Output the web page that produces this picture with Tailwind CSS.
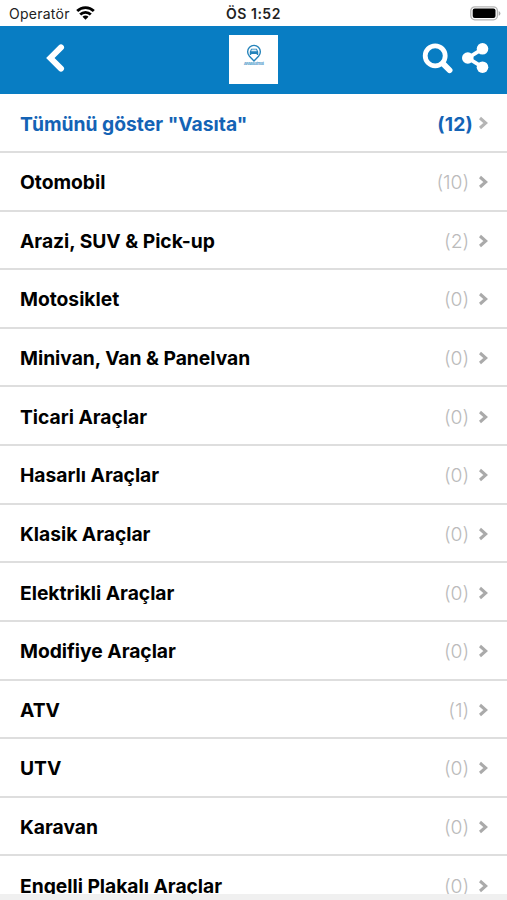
<!DOCTYPE html>
<html lang="tr">
<head>
  <meta charset="UTF-8" />
  <meta name="viewport" content="width=device-width, initial-scale=1.0" />
  <title>Vasıta</title>
  <script src="https://cdn.jsdelivr.net/npm/@tailwindcss/browser@4"></script>
</head>
<body class="h-screen flex flex-col overflow-hidden bg-white text-black font-['Inter',sans-serif]">
  <!-- Durum çubuğu -->
  <div class="h-[25.5px] shrink-0 grid grid-cols-3 items-center pl-[9px] pr-[6px] pt-px text-[14px] leading-none">
    <div class="flex items-center gap-[6px] text-[#222]">
      <span class="pt-px tracking-[0.25px]">Operatör</span>
      <svg class="w-[19px] h-[14px] mb-px text-black" viewBox="0 0 19 14" fill="none" stroke="currentColor" stroke-width="2.8">
        <path d="M1.2 5.1a11.8 11.8 0 0 1 16.6 0" />
        <path d="M4.2 8.5a7.5 7.5 0 0 1 10.6 0" />
        <path d="M9.5 13.8 6.5 10.8a4.2 4.2 0 0 1 6 0z" fill="currentColor" stroke="none" />
      </svg>
    </div>
    <div class="text-center pt-px pr-[3px] font-semibold tracking-[0.5px] text-[#222]">ÖS 1:52</div>
    <svg class="justify-self-end w-[31px] h-[15px]" viewBox="0 0 31 15">
      <rect x=".8" y=".8" width="26.6" height="13" rx="4" fill="#fff" stroke="#b5b5b5" stroke-width="1.3" />
      <rect x="2.7" y="2.6" width="22.8" height="9.5" rx="2" fill="#000" />
      <path d="M28.7 5v4.8q1.7-.7 1.7-2.4t-1.7-2.4z" fill="#aaa" />
    </svg>
  </div>

  <!-- Üst menü -->
  <header class="h-[68px] shrink-0 bg-[#087dc3] grid grid-cols-3 items-center text-white">
    <button class="justify-self-start ml-[45px] mb-[3px]">
      <svg class="block w-5 h-[30px]" viewBox="0 0 20 30" fill="none" stroke="currentColor" stroke-width="6" stroke-linecap="round" stroke-linejoin="miter">
        <path d="M16 4.4 5.4 15 16 25.6" />
      </svg>
    </button>
    <div class="justify-self-center w-[49px] h-[49px] bg-white flex flex-col items-center pt-[9px]">
      <svg class="w-[16px] h-[18px]" viewBox="0 0 15 17">
        <path d="M7.5 16 3.2 11.5A6 6 0 1 1 11.8 11.5z" fill="#fff" stroke="#2483ba" stroke-width="1.3" />
        <path d="M3.5 7.3 4.8 4.6h5.4l1.3 2.7v3h-1.4v-.9H4.9v.9H3.5z" fill="#2483ba" />
        <path d="M5.4 5.3h4.2l.6 1.5H4.8z" fill="#d9edf8" />
      </svg>
      <span class="text-[4px] leading-[4px] font-bold tracking-[-0.7px] text-[#5fa6d0] whitespace-nowrap">ARABA SİTESİ</span>
    </div>
    <div class="justify-self-end flex items-center gap-[8px] mr-[18px] mb-[3px]">
      <svg class="w-[32px] h-[31px]" viewBox="0 0 32 31" fill="none" stroke="currentColor">
        <circle cx="13.2" cy="12.8" r="10" stroke-width="4.8" />
        <path d="m21 20.6 6.6 6.6" stroke-width="5.8" stroke-linecap="round" />
      </svg>
      <svg class="w-[27px] h-[30px]" viewBox="0 0 27 30" fill="currentColor">
        <path d="M20.5 5.8 6 15l14.5 9.2" fill="none" stroke="currentColor" stroke-width="3.8" />
        <circle cx="20.5" cy="5.8" r="5.8" />
        <circle cx="5.8" cy="15" r="5.8" />
        <circle cx="20.5" cy="24.2" r="5.8" />
      </svg>
    </div>
  </header>

  <!-- Kategori listesi -->
  <main class="h-[400px] grow overflow-hidden">
    <a href="#" class="h-[59.4px] flex items-center border-b-2 border-[#dedede] pl-5 pr-[18px] pt-[3px] text-[19.3px] font-bold text-[#1463b5]">
      <span class="grow pt-px">Tümünü göster "Vasıta"</span>
      <span class="pt-px mr-[5px] tracking-[0.2px]">(12)</span>
      <svg class="mb-px w-[11px] h-[14px]" viewBox="0 0 11 14" fill="none" stroke="#b5b5b5" stroke-width="3">
        <path d="m2 2 5.7 5L2 12" />
      </svg>
    </a>
    <div id="kategoriler"></div>
  </main>
  <div class="h-[6px] shrink-0 bg-[#f0f0f0]"></div>

<script>
  const kategoriler = [
    ['Otomobil', 10],
    ['Arazi, SUV & Pick-up', 2],
    ['Motosiklet', 0],
    ['Minivan, Van & Panelvan', 0],
    ['Ticari Araçlar', 0],
    ['Hasarlı Araçlar', 0],
    ['Klasik Araçlar', 0],
    ['Elektrikli Araçlar', 0],
    ['Modifiye Araçlar', 0],
    ['ATV', 1],
    ['UTV', 0],
    ['Karavan', 0],
    ['Engelli Plakalı Araçlar', 0]
  ];

  document.getElementById('kategoriler').innerHTML = kategoriler.map(([ad, adet]) => `
    <a href="#" class="h-[58.63px] flex items-center border-b-2 border-[#dedede] pl-5 pr-[18px] pt-[2px] text-[19.3px]">
      <span class="grow pt-px font-bold tracking-[-0.03px]">${ad.replace('&', '&amp;')}</span>
      <span class="pt-px mr-[9px] font-light tracking-[-0.1px] text-[#bbb]">(${adet})</span>
      <svg class="w-[11px] h-[14px]" viewBox="0 0 11 14" fill="none" stroke="#aaa" stroke-width="3">
        <path d="m2 2 5.7 5L2 12" />
      </svg>
    </a>
  `).join('');
</script>
</body>
</html>
